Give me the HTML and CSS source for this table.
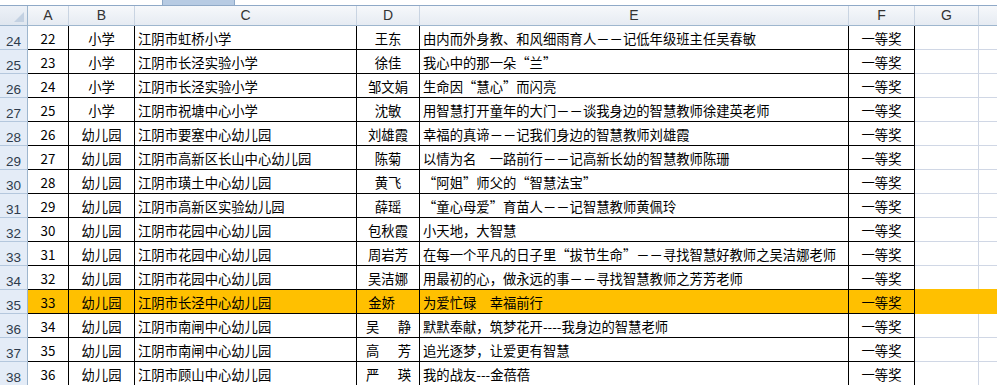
FILE: index.html
```html
<!DOCTYPE html>
<html lang="zh-CN">
<head>
<meta charset="utf-8">
<title>Sheet</title>
<link rel="stylesheet" href="styles.css">
</head>
<body>
<div class="sheet">
  <div class="topbar"><div class="thumb"></div></div>
  <div class="row head">
    <div class="corner"><span class="tri"></span></div>
    <div class="ch">A</div><div class="ch">B</div><div class="ch">C</div><div class="ch">D</div><div class="ch">E</div><div class="ch">F</div><div class="ch">G</div><div class="ch last"></div>
  </div>
  <div class="row"><div class="rh">24</div><div class="c ctr">22</div><div class="c ctr">小学</div><div class="c">江阴市虹桥小学</div><div class="c ctr">王东</div><div class="c e">由内而外身教、和风细雨育人－－记低年级班主任吴春敏</div><div class="c ctr">一等奖</div><div class="g"></div><div class="g"></div></div>
  <div class="row"><div class="rh">25</div><div class="c ctr">23</div><div class="c ctr">小学</div><div class="c">江阴市长泾实验小学</div><div class="c ctr">徐佳</div><div class="c e">我心中的那一朵“兰”</div><div class="c ctr">一等奖</div><div class="g"></div><div class="g"></div></div>
  <div class="row"><div class="rh">26</div><div class="c ctr">24</div><div class="c ctr">小学</div><div class="c">江阴市长泾实验小学</div><div class="c ctr">邹文娟</div><div class="c e">生命因“慧心”而闪亮</div><div class="c ctr">一等奖</div><div class="g"></div><div class="g"></div></div>
  <div class="row"><div class="rh">27</div><div class="c ctr">25</div><div class="c ctr">小学</div><div class="c">江阴市祝塘中心小学</div><div class="c ctr">沈敏</div><div class="c e">用智慧打开童年的大门－－谈我身边的智慧教师徐建英老师</div><div class="c ctr">一等奖</div><div class="g"></div><div class="g"></div></div>
  <div class="row"><div class="rh">28</div><div class="c ctr">26</div><div class="c ctr">幼儿园</div><div class="c">江阴市要塞中心幼儿园</div><div class="c ctr">刘雄霞</div><div class="c e">幸福的真谛－－记我们身边的智慧教师刘雄霞</div><div class="c ctr">一等奖</div><div class="g"></div><div class="g"></div></div>
  <div class="row"><div class="rh">29</div><div class="c ctr">27</div><div class="c ctr">幼儿园</div><div class="c">江阴市高新区长山中心幼儿园</div><div class="c ctr">陈菊</div><div class="c e">以情为名　一路前行－－记高新长幼的智慧教师陈珊</div><div class="c ctr">一等奖</div><div class="g"></div><div class="g"></div></div>
  <div class="row"><div class="rh">30</div><div class="c ctr">28</div><div class="c ctr">幼儿园</div><div class="c">江阴市璜土中心幼儿园</div><div class="c ctr">黄飞</div><div class="c e">“阿姐”师父的“智慧法宝”</div><div class="c ctr">一等奖</div><div class="g"></div><div class="g"></div></div>
  <div class="row"><div class="rh">31</div><div class="c ctr">29</div><div class="c ctr">幼儿园</div><div class="c">江阴市高新区实验幼儿园</div><div class="c ctr">薛瑶</div><div class="c e">“童心母爱”育苗人－－记智慧教师黄佩玲</div><div class="c ctr">一等奖</div><div class="g"></div><div class="g"></div></div>
  <div class="row"><div class="rh">32</div><div class="c ctr">30</div><div class="c ctr">幼儿园</div><div class="c">江阴市花园中心幼儿园</div><div class="c ctr">包秋霞</div><div class="c e">小天地，大智慧</div><div class="c ctr">一等奖</div><div class="g"></div><div class="g"></div></div>
  <div class="row"><div class="rh">33</div><div class="c ctr">31</div><div class="c ctr">幼儿园</div><div class="c">江阴市花园中心幼儿园</div><div class="c ctr">周岩芳</div><div class="c e">在每一个平凡的日子里“拔节生命”－－寻找智慧好教师之吴洁娜老师</div><div class="c ctr">一等奖</div><div class="g"></div><div class="g"></div></div>
  <div class="row"><div class="rh">34</div><div class="c ctr">32</div><div class="c ctr">幼儿园</div><div class="c">江阴市花园中心幼儿园</div><div class="c ctr">吴洁娜</div><div class="c e">用最初的心，做永远的事－－寻找智慧教师之芳芳老师</div><div class="c ctr">一等奖</div><div class="g"></div><div class="g"></div></div>
  <div class="row hl"><div class="rh">35</div><div class="c ctr">33</div><div class="c ctr">幼儿园</div><div class="c">江阴市长泾中心幼儿园</div><div class="c ctr"><span class="shift">金娇</span></div><div class="c e">为爱忙碌　幸福前行</div><div class="c ctr">一等奖</div><div class="g"></div><div class="g"></div></div>
  <div class="row"><div class="rh">36</div><div class="c ctr">34</div><div class="c ctr">幼儿园</div><div class="c">江阴市南闸中心幼儿园</div><div class="c spread"><span>吴</span><span>静</span></div><div class="c e">默默奉献，筑梦花开----我身边的智慧老师</div><div class="c ctr">一等奖</div><div class="g"></div><div class="g"></div></div>
  <div class="row"><div class="rh">37</div><div class="c ctr">35</div><div class="c ctr">幼儿园</div><div class="c">江阴市南闸中心幼儿园</div><div class="c spread"><span>高</span><span>芳</span></div><div class="c e">追光逐梦，让爱更有智慧</div><div class="c ctr">一等奖</div><div class="g"></div><div class="g"></div></div>
  <div class="row"><div class="rh">38</div><div class="c ctr">36</div><div class="c ctr">幼儿园</div><div class="c">江阴市顾山中心幼儿园</div><div class="c spread"><span>严</span><span>瑛</span></div><div class="c e">我的战友---金蓓蓓</div><div class="c ctr">一等奖</div><div class="g"></div><div class="g"></div></div>
</div>
</body>
</html>
```

FILE: styles.css
```css
* { box-sizing: border-box; }
html, body { margin: 0; padding: 0; background: #fff; }
body { width: 997px; height: 385px; overflow: hidden; }

.sheet { width: 997px; }

.topbar {
  height: 6px;
  border-bottom: 1px solid #8fa9c7;
  display: flex;
  padding-left: 162px;
}
.thumb {
  width: 73px;
  height: 5px;
  background: #b7cbe3;
  border-left: 1px solid #8fa9c7;
  border-right: 1px solid #8fa9c7;
}

.row {
  display: grid;
  grid-template-columns: 28px 41px 66px 222px 63px 429px 66px 64px 1fr;
  height: 24px;
}
.row.head { height: 20px; }

.corner {
  background: linear-gradient(#edf1f7, #dfe6ef);
  border-right: 1px solid #9eb6ce;
  border-bottom: 1px solid #9eb6ce;
  display: flex;
  align-items: flex-end;
  justify-content: flex-end;
  padding: 0 3px 3px 0;
}
.tri {
  width: 0; height: 0;
  border-left: 10px solid transparent;
  border-bottom: 10px solid #c3d1e2;
}

.ch {
  background: linear-gradient(#f6f8fb, #e6ebf2);
  border-right: 1px solid #c9d4e2;
  border-bottom: 1px solid #9eb6ce;
  font-family: "Liberation Sans", Arial, sans-serif;
  font-size: 14px;
  line-height: 14px;
  color: #333;
  display: flex;
  align-items: flex-end;
  justify-content: center;
  padding-bottom: 3px;
}
.ch.last { border-right: none; }

.rh {
  background: #e4ecf7;
  border-right: 1px solid #9eb6ce;
  border-bottom: 1px solid #b4c7dd;
  font-family: "Liberation Sans", Arial, sans-serif;
  font-size: 13.5px;
  line-height: 13px;
  color: #2e3b4c;
  display: flex;
  align-items: flex-end;
  justify-content: center;
  padding-bottom: 1px;
}

.c {
  border-right: 1px solid #000;
  border-bottom: 1px solid #000;
  font-family: "Noto Sans CJK SC", sans-serif;
  font-size: 13.33px;
  line-height: 14px;
  color: #000;
  display: flex;
  align-items: flex-end;
  padding: 0 0 3px 3px;
  white-space: nowrap;
  overflow: hidden;
}
.c.ctr { justify-content: center; padding-left: 0; }
.c.spread { justify-content: space-between; padding: 0 8px 3px 9px; }
.shift { margin-right: 13px; }

.g {
  border-right: 1px solid #d0d7e5;
  border-bottom: 1px solid #d0d7e5;
}
.g:last-child { border-right: none; }

.row.hl .c, .row.hl .g { background: #ffc000; }
.row.hl .g { border-color: #ffc000; box-shadow: 0 -1px 0 #ffc000; }
```
